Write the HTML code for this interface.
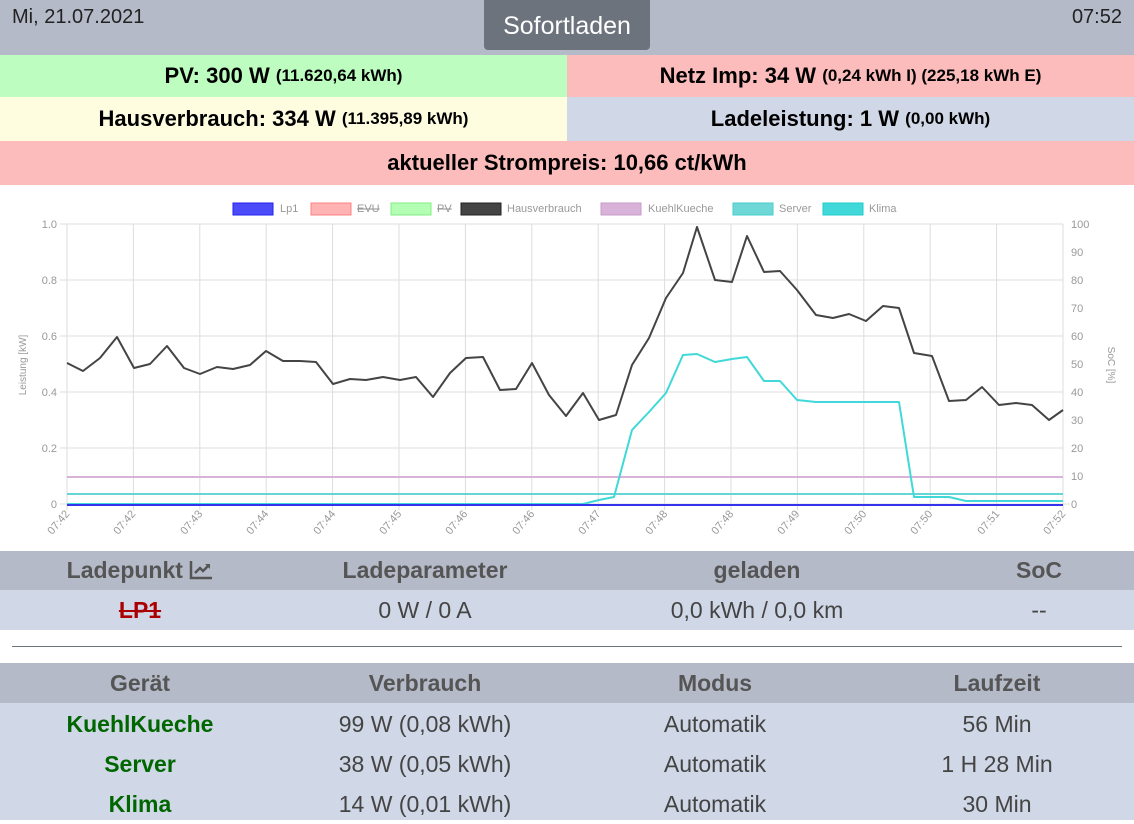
<!DOCTYPE html>
<html><head><meta charset="utf-8"><style>
*{margin:0;padding:0;box-sizing:border-box}
body{width:1134px;height:820px;overflow:hidden;background:#fff;font-family:"Liberation Sans","DejaVu Sans",sans-serif;position:relative}
.abs{position:absolute}
.row{position:absolute;display:flex;align-items:center;justify-content:center;font-weight:bold;font-size:22px;color:#000}
.row small{font-size:17px}
.tbl{position:absolute;left:0;width:1134px;display:flex;align-items:center;font-size:23px}
.tbl div{text-align:center}
</style></head><body>
<div class="abs" style="left:0;top:0;width:1134px;height:55px;background:#b4bac8"></div>
<div class="abs" style="left:12px;top:6px;font-size:20px;color:#222">Mi, 21.07.2021</div>
<div class="abs" style="right:12px;top:6px;font-size:20px;color:#222">07:52</div>
<div class="abs" style="left:484px;top:0;width:166px;height:50px;background:#6c737d;border-radius:0 0 4px 4px;color:#fff;font-size:25px;text-align:center;line-height:52px">Sofortladen</div>
<div class="row" style="left:0;top:55px;width:567px;height:42px;background:#bdfdc0">PV: 300 W&nbsp;<small>(11.620,64 kWh)</small></div>
<div class="row" style="left:567px;top:55px;width:567px;height:42px;background:#fdbcbc">Netz Imp: 34 W&nbsp;<small>(0,24 kWh I) (225,18 kWh E)</small></div>
<div class="row" style="left:0;top:97px;width:567px;height:44px;background:#fefde0">Hausverbrauch: 334 W&nbsp;<small>(11.395,89 kWh)</small></div>
<div class="row" style="left:567px;top:97px;width:567px;height:44px;background:#d0d7e6">Ladeleistung: 1 W&nbsp;<small>(0,00 kWh)</small></div>
<div class="row" style="left:0;top:141px;width:1134px;height:44px;background:#fdbcbc">aktueller Strompreis: 10,66 ct/kWh</div>

<svg class="abs" style="left:0;top:185px" width="1134" height="366" viewBox="0 185 1134 366" font-family="Liberation Sans, sans-serif">
<g stroke="#ddd" stroke-width="1">
<line x1="60" y1="224" x2="1063" y2="224"/><line x1="60" y1="280" x2="1063" y2="280"/><line x1="60" y1="336" x2="1063" y2="336"/><line x1="60" y1="392" x2="1063" y2="392"/><line x1="60" y1="448" x2="1063" y2="448"/><line x1="60" y1="504" x2="1070" y2="504"/>
<line x1="67" y1="224" x2="67" y2="510"/><line x1="133.4" y1="224" x2="133.4" y2="510"/><line x1="199.8" y1="224" x2="199.8" y2="510"/><line x1="266.2" y1="224" x2="266.2" y2="510"/><line x1="332.6" y1="224" x2="332.6" y2="510"/><line x1="399" y1="224" x2="399" y2="510"/><line x1="465.4" y1="224" x2="465.4" y2="510"/><line x1="531.8" y1="224" x2="531.8" y2="510"/><line x1="598.2" y1="224" x2="598.2" y2="510"/><line x1="664.6" y1="224" x2="664.6" y2="510"/><line x1="731" y1="224" x2="731" y2="510"/><line x1="797.4" y1="224" x2="797.4" y2="510"/><line x1="863.8" y1="224" x2="863.8" y2="510"/><line x1="930.2" y1="224" x2="930.2" y2="510"/><line x1="996.6" y1="224" x2="996.6" y2="510"/><line x1="1063" y1="224" x2="1063" y2="510"/>
</g>
<g fill="#999" font-size="11" text-anchor="end">
<text x="57" y="228">1.0</text><text x="57" y="284">0.8</text><text x="57" y="340">0.6</text><text x="57" y="396">0.4</text><text x="57" y="452">0.2</text><text x="57" y="508">0</text>
</g>
<g fill="#999" font-size="11">
<text x="1071" y="228">100</text><text x="1071" y="256">90</text><text x="1071" y="284">80</text><text x="1071" y="312">70</text><text x="1071" y="340">60</text><text x="1071" y="368">50</text><text x="1071" y="396">40</text><text x="1071" y="424">30</text><text x="1071" y="452">20</text><text x="1071" y="480">10</text><text x="1071" y="508">0</text>
</g>
<text transform="translate(26,365) rotate(-90)" fill="#999" font-size="10" text-anchor="middle">Leistung [kW]</text>
<text transform="translate(1108,365) rotate(90)" fill="#999" font-size="10" text-anchor="middle">SoC [%]</text>
<g fill="#999" font-size="11" text-anchor="end">
<text transform="translate(70,514) rotate(-50)">07:42</text><text transform="translate(136,514) rotate(-50)">07:42</text><text transform="translate(203,514) rotate(-50)">07:43</text><text transform="translate(269,514) rotate(-50)">07:44</text><text transform="translate(336,514) rotate(-50)">07:44</text><text transform="translate(402,514) rotate(-50)">07:45</text><text transform="translate(468,514) rotate(-50)">07:46</text><text transform="translate(535,514) rotate(-50)">07:46</text><text transform="translate(601,514) rotate(-50)">07:47</text><text transform="translate(668,514) rotate(-50)">07:48</text><text transform="translate(734,514) rotate(-50)">07:48</text><text transform="translate(800,514) rotate(-50)">07:49</text><text transform="translate(867,514) rotate(-50)">07:50</text><text transform="translate(933,514) rotate(-50)">07:50</text><text transform="translate(1000,514) rotate(-50)">07:51</text><text transform="translate(1066,514) rotate(-50)">07:52</text>
</g>
<g font-size="11" fill="#999">
<rect x="233" y="203" width="40" height="12" fill="#4b4bfa" stroke="#2222ee"/><text x="280" y="212">Lp1</text>
<rect x="311" y="203" width="40" height="12" fill="#ffb3b3" stroke="#ff8080"/><text x="357" y="212" text-decoration="line-through">EVU</text>
<rect x="391" y="203" width="40" height="12" fill="#b3ffb3" stroke="#80ee80"/><text x="437" y="212" text-decoration="line-through">PV</text>
<rect x="461" y="203" width="40" height="12" fill="#444" stroke="#222"/><text x="507" y="212">Hausverbrauch</text>
<rect x="601" y="203" width="40" height="12" fill="#d8b2d8" stroke="#c89cc8"/><text x="648" y="212">KuehlKueche</text>
<rect x="733" y="203" width="40" height="12" fill="#6fd8d6" stroke="#4cc"/><text x="779" y="212">Server</text>
<rect x="823" y="203" width="40" height="12" fill="#40d8d8" stroke="#2cc"/><text x="869" y="212">Klima</text>
</g>
<g fill="none" stroke-linejoin="round" stroke-width="2">
<line x1="67" y1="477" x2="1063" y2="477" stroke="#d8b2d8"/>
<line x1="67" y1="494" x2="1063" y2="494" stroke="#66d6d4"/>
<polyline stroke="#40d8d8" points="67,504 583,504 599,500 614,497 632,430 649,412 666,393 683,355 697,354 715,362 732,359 747,357 764,381 780,381 797,400 816,402 899,402 914,497 949,497 966,501 1063,501"/>
<line x1="67" y1="505" x2="1063" y2="505" stroke="#3333ee"/>
<polyline stroke="#444" points="67,363 83,371 100,358 117,337 134,368 150,364 167,346 184,368 200,374 217,367 233,369 250,365 266,351 283,361 300,361 316,362 333,384 350,379 366,380 383,377 400,380 416,377 433,397 450,373 466,358 483,357 500,390 516,389 532,363 549,395 566,416 583,393 599,420 616,415 632,365 649,338 666,298 683,273 697,227 715,280 732,282 747,236 764,272 780,271 797,290 816,315 833,318 849,314 866,321 883,306 899,308 914,353 932,356 949,401 966,400 982,387 999,405 1016,403 1032,405 1049,420 1063,410"/>
</g>
</svg>

<div class="tbl" style="top:551px;height:39px;background:#b4bac8;font-weight:bold;color:#555">
<div style="width:280px">Ladepunkt <svg width="24" height="20" viewBox="0 0 24 20" style="vertical-align:-2px"><path d="M2 1V18H23" stroke="#555" stroke-width="2.5" fill="none"/><path d="M6 13L11 8L14 11L20 5" stroke="#555" stroke-width="2.5" fill="none"/><path d="M16 4H21V9Z" fill="#555"/></svg></div>
<div style="width:290px">Ladeparameter</div><div style="width:374px">geladen</div><div style="width:190px">SoC</div></div>
<div class="tbl" style="top:590px;height:40px;background:#d0d7e6;color:#444">
<div style="width:280px;color:#a00;font-weight:bold;text-decoration:line-through">LP1</div>
<div style="width:290px">0 W / 0 A</div><div style="width:374px">0,0 kWh / 0,0 km</div><div style="width:190px">--</div></div>
<div class="abs" style="left:12px;top:646px;width:1110px;height:1px;background:#6c737d"></div>
<div class="tbl" style="top:663px;height:40px;background:#b4bac8;font-weight:bold;color:#555">
<div style="width:280px">Gerät</div><div style="width:290px">Verbrauch</div><div style="width:290px">Modus</div><div style="width:274px">Laufzeit</div></div>
<div class="abs" style="left:0;top:703px;width:1134px;height:117px;background:#d0d7e6"></div>
<div class="tbl" style="top:704px;height:40px;color:#444"><div style="width:280px;color:#060;font-weight:bold">KuehlKueche</div><div style="width:290px">99 W (0,08 kWh)</div><div style="width:290px">Automatik</div><div style="width:274px">56 Min</div></div>
<div class="tbl" style="top:744px;height:40px;color:#444"><div style="width:280px;color:#060;font-weight:bold">Server</div><div style="width:290px">38 W (0,05 kWh)</div><div style="width:290px">Automatik</div><div style="width:274px">1 H 28 Min</div></div>
<div class="tbl" style="top:784px;height:40px;color:#444"><div style="width:280px;color:#060;font-weight:bold">Klima</div><div style="width:290px">14 W (0,01 kWh)</div><div style="width:290px">Automatik</div><div style="width:274px">30 Min</div></div>
</body></html>
